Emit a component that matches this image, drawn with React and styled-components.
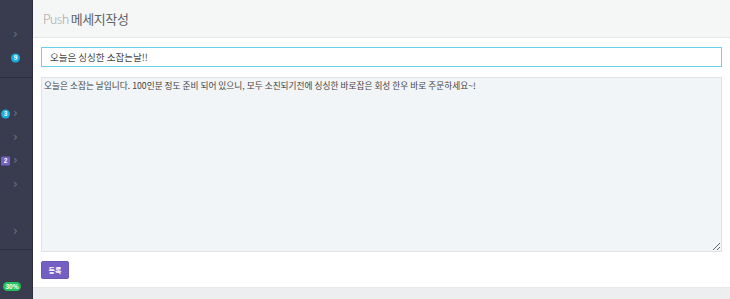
import React from "react";
import styled, { createGlobalStyle } from "styled-components";

const GlobalStyle = createGlobalStyle`
  html, body {
    margin: 0;
    padding: 0;
    background: #eceeef;
    font-family: "Noto Sans CJK KR", "Noto Sans", sans-serif;
  }
`;

const Layout = styled.div`
  display: flex;
  width: 730px;
  height: 299px;
  overflow: hidden;
`;

const Sidebar = styled.div`
  width: 32px;
  flex: none;
  background: #393c4f;
  display: flex;
  flex-direction: column;
`;

const Section = styled.div`
  display: flex;
  flex-direction: column;
  padding: ${(p) => p.$pad || "0"};
  border-bottom: ${(p) => (p.$line ? "1px solid #2d2f3e" : "none")};
`;

const NavRow = styled.div`
  position: relative;
  height: ${(p) => p.$h || 23}px;
  display: flex;
  align-items: center;
`;

const Chevron = styled.span`
  position: absolute;
  left: 13px;
  top: 50%;
  transform: translateY(-55%);
  color: #6f7384;
  font-family: "DejaVu Sans", sans-serif;
  font-size: 12px;
  line-height: 1;
`;

const Badge = styled.span`
  position: absolute;
  left: ${(p) => p.$left}px;
  top: 50%;
  transform: translateY(-50%);
  width: 9px;
  height: 9px;
  border-radius: ${(p) => (p.$square ? "1px" : "50%")};
  background: ${(p) => p.$color};
  color: #fff;
  font-family: "Liberation Sans", sans-serif;
  font-size: 6.5px;
  font-weight: bold;
  display: flex;
  align-items: center;
  justify-content: center;
  line-height: 1;
`;

const Pill = styled.span`
  margin: 0 0 0 3px;
  width: 18px;
  height: 9px;
  border-radius: 5px;
  background: #22c35e;
  color: #fff;
  font-family: "Liberation Sans", sans-serif;
  font-size: 6.5px;
  font-weight: bold;
  display: flex;
  align-items: center;
  justify-content: center;
`;

const Main = styled.div`
  flex: 1;
  display: flex;
  flex-direction: column;
  border-left: 1px solid #2d2f3e;
`;

const Header = styled.div`
  height: 38px;
  flex: none;
  background: #f5f6f6;
  border-bottom: 1px solid #e3e6e8;
  display: flex;
  align-items: center;
  padding-left: 10px;
  box-sizing: border-box;
  font-size: 13px;
  letter-spacing: -0.4px;
`;

const Light = styled.span`
  font-family: "Lato", sans-serif;
  font-weight: 300;
  color: #9a9da0;
  margin-right: 2px;
`;

const Dark = styled.span`
  color: #5f6366;
`;

const Panel = styled.div`
  background: #fff;
  padding: 9px 8px;
  display: flex;
  flex-direction: column;
  gap: 10px;
  height: 250px;
  flex: none;
  box-sizing: border-box;
  border-bottom: 1px solid #e6e8ea;
`;

const TitleInput = styled.input`
  height: 20px;
  flex: none;
  box-sizing: border-box;
  border: 1px solid #6ad0eb;
  padding: 0 8px;
  font-family: "Noto Sans CJK KR", sans-serif;
  font-size: 9.5px;
  color: #444;
  outline: none;
`;

const Body = styled.textarea`
  height: 175px;
  flex: none;
  box-sizing: border-box;
  background: #f2f5f7;
  border: 1px solid #dfe3e6;
  padding: 2px 2px;
  font-family: "Noto Sans CJK KR", sans-serif;
  font-size: 8.7px;
  line-height: 1.4;
  color: #444;
  resize: vertical;
  outline: none;
  margin-bottom: -1px;
`;

const Button = styled.button`
  align-self: flex-start;
  flex: none;
  width: 28px;
  height: 18px;
  border: 1px solid #6a57b8;
  border-radius: 2px;
  background: #7460c2;
  color: #fff;
  font-family: "Noto Sans CJK KR", sans-serif;
  font-size: 7px;
  font-weight: bold;
  padding: 0;
`;

export default function App() {
  return (
    <>
      <GlobalStyle />
      <Layout>
        <Sidebar>
          <Section $pad="23px 0 8px" $line>
            <NavRow><Chevron>›</Chevron></NavRow>
            <NavRow><Badge $left={11} $color="#19aee2">9</Badge></NavRow>
          </Section>
          <Section $pad="0 0 5px" $line>
            <NavRow $h={24} />
            <NavRow $h={24}><Badge $left={1} $color="#19aee2">3</Badge><Chevron>›</Chevron></NavRow>
            <NavRow $h={23}><Chevron>›</Chevron></NavRow>
            <NavRow $h={24}><Badge $left={1} $square $color="#7460c2">2</Badge><Chevron>›</Chevron></NavRow>
            <NavRow $h={23}><Chevron>›</Chevron></NavRow>
            <NavRow $h={24} />
            <NavRow $h={24}><Chevron>›</Chevron></NavRow>
          </Section>
          <Section $pad="32px 0 0">
            <Pill>30%</Pill>
          </Section>
        </Sidebar>
        <Main>
          <Header>
            <Light>Push</Light>
            <Dark>메세지작성</Dark>
          </Header>
          <Panel>
            <TitleInput defaultValue="오늘은 싱싱한 소잡는날!!" />
            <Body defaultValue="오늘은 소잡는 날입니다. 100인분 정도 준비 되어 있으니, 모두 소진되기전에 싱싱한 바로잡은 회성 한우 바로 주문하세요~!" />
            <Button>등록</Button>
          </Panel>
        </Main>
      </Layout>
    </>
  );
}
